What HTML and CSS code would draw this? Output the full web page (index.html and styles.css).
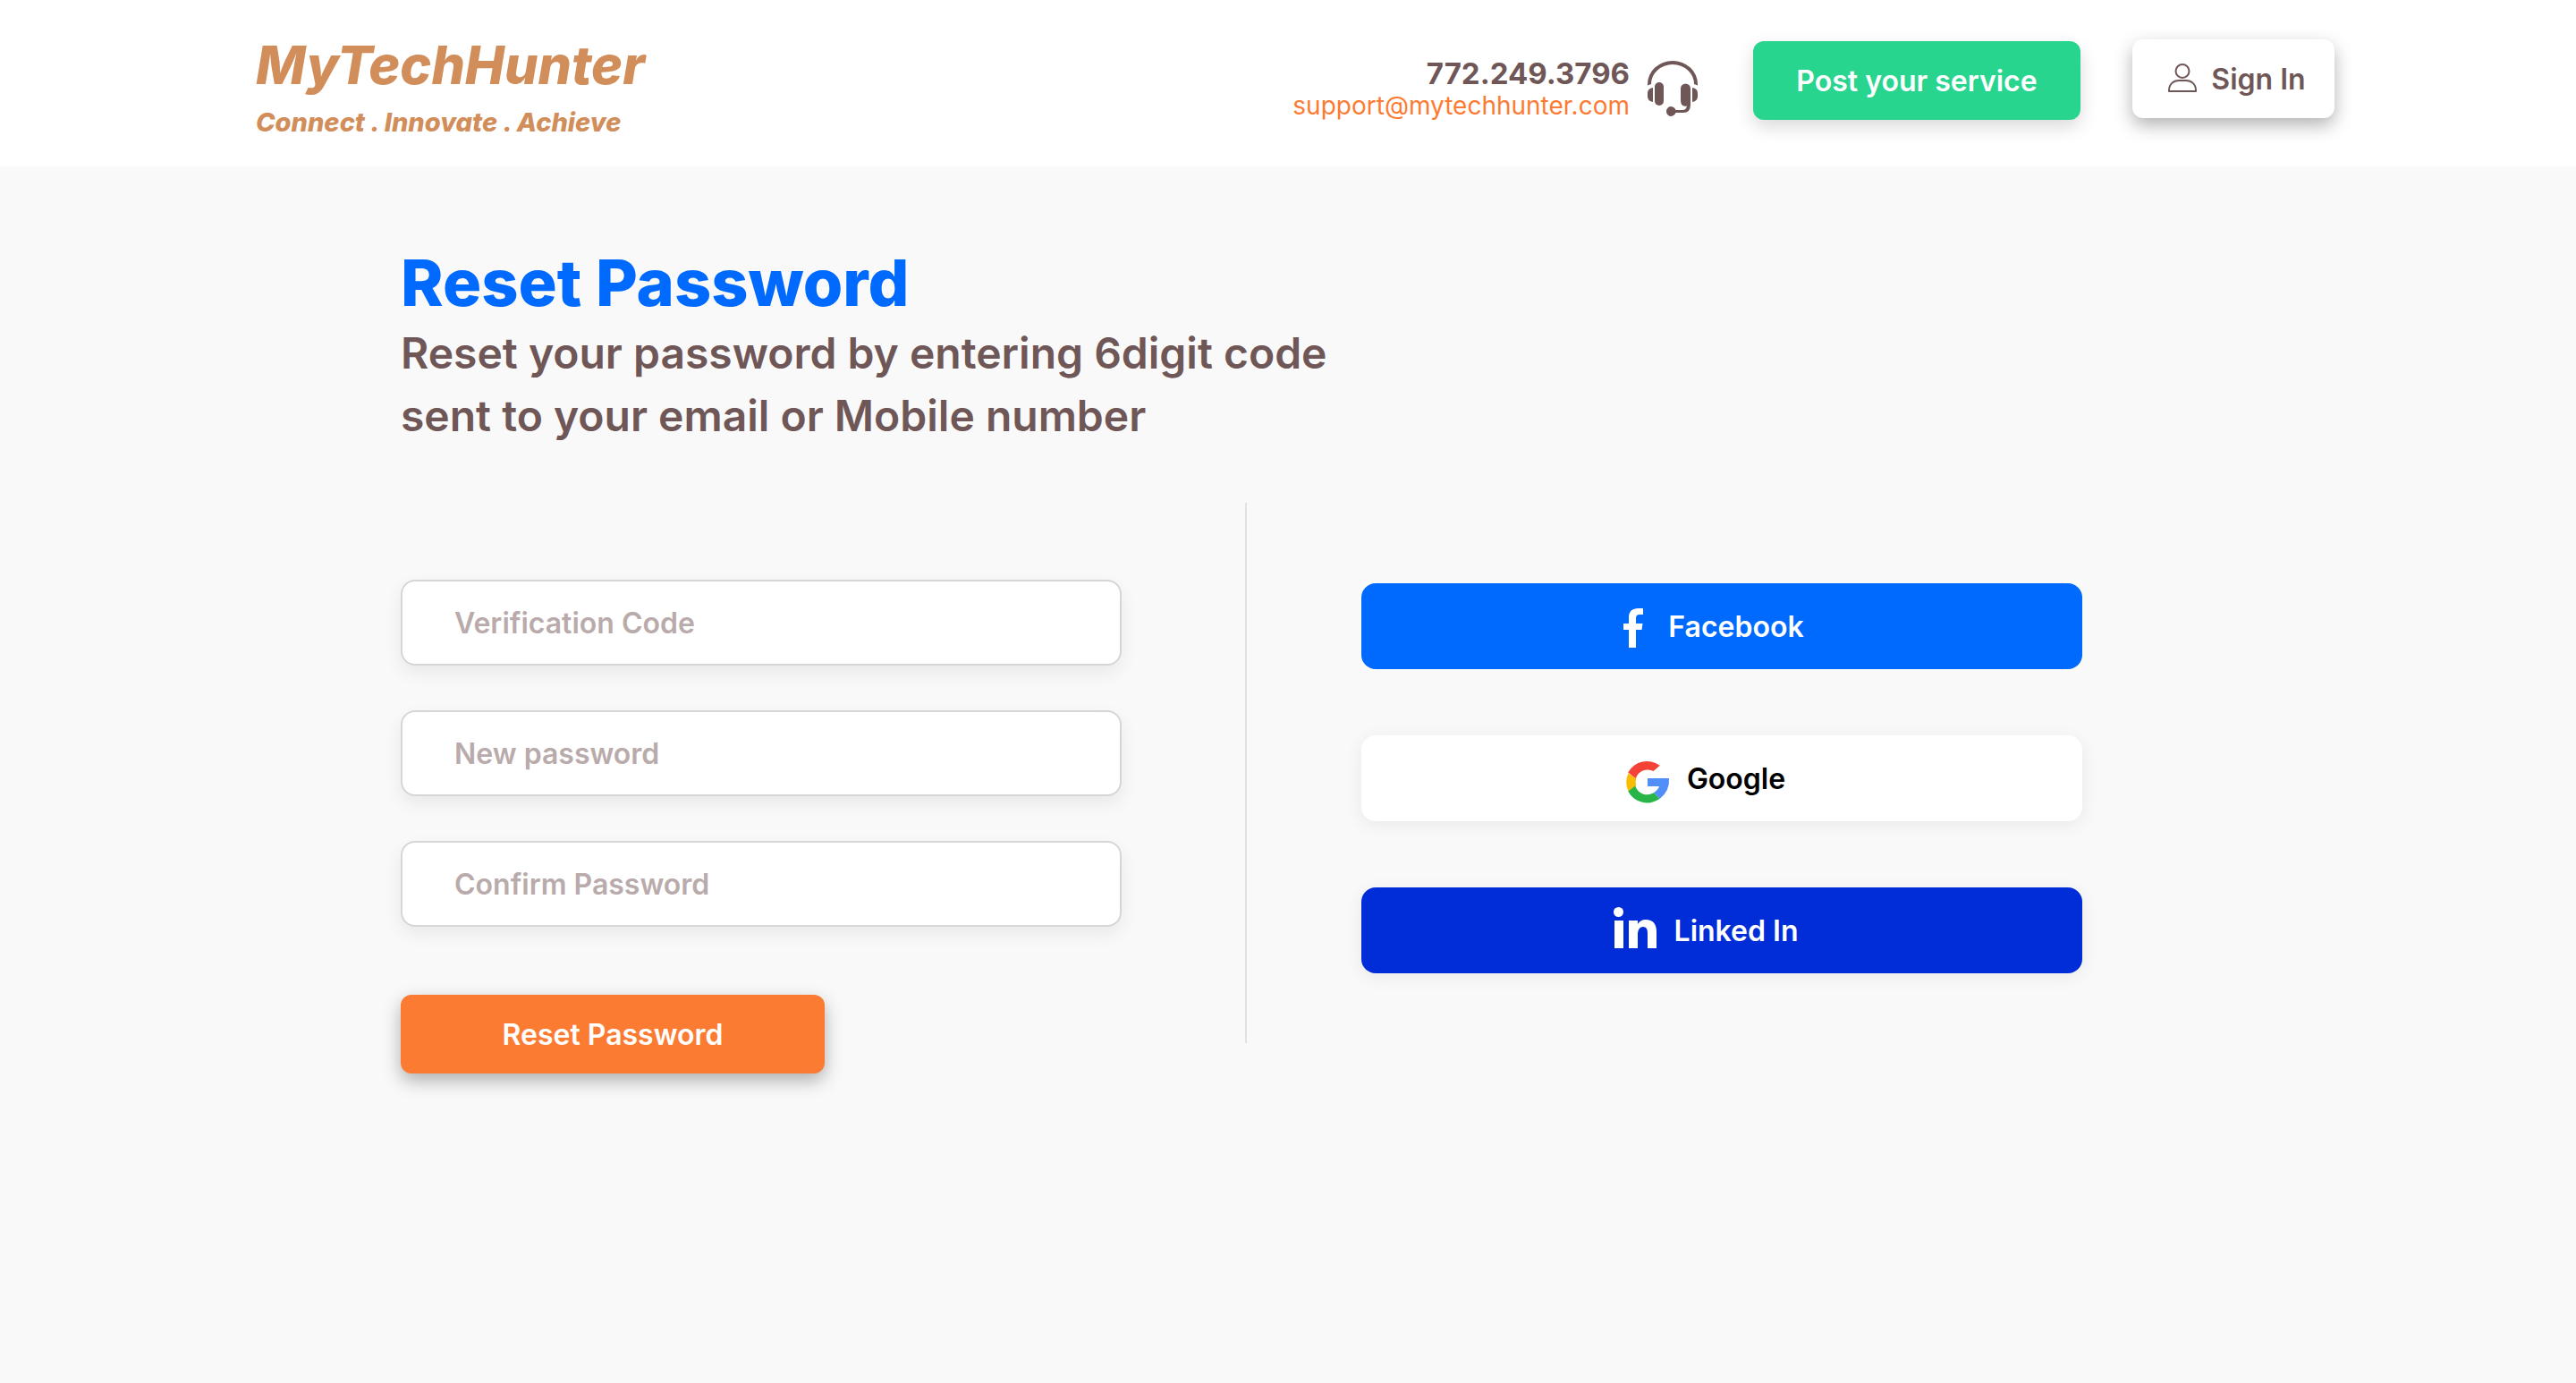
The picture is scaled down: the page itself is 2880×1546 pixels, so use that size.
FILE: index.html
```html
<!DOCTYPE html>
<html lang="en">
<head>
<meta charset="utf-8">
<meta name="viewport" content="width=device-width, initial-scale=1">
<title>Reset Password - MyTechHunter</title>
<link rel="stylesheet" href="styles.css">
</head>
<body>
<header class="site-header">
  <a class="brand" href="#">
    <span class="brand-name">MyTechHunter</span>
    <span class="brand-tagline">Connect . Innovate . Achieve</span>
  </a>
  <div class="header-actions">
    <div class="contact">
      <div class="contact-lines">
        <a class="contact-phone" href="tel:7722493796">772.249.3796</a>
        <a class="contact-email" href="mailto:support@mytechhunter.com">support@mytechhunter.com</a>
      </div>
      <svg class="icon-headset" viewBox="0 0 56 62" aria-hidden="true">
        <path d="M0 27.500V26a28 26 0 0 1 56 0v1.500l-4-1.500a24 22 0 0 0-48 0z" fill="currentColor"/>
        <rect x="8" y="24" width="10" height="26" rx="5" fill="currentColor"/>
        <path d="M6 30v16Q0 45 0 40v-4Q0 31 6 30zM50 30v16q6-1 6-6v-4q0-5-6-6z" fill="currentColor"/>
        <path d="M37 31a5.500 5.500 0 0 1 11 0v18q0 9-8 9h-8.500a5.400 5.400 0 1 1 0-3H39q4 0 5-4.500Q37 52 37 44z" fill="currentColor"/>
      </svg>
    </div>
    <button class="button button-post" type="button">Post your service</button>
    <button class="button button-signin" type="button">
      <svg class="icon-user" viewBox="0 0 32 34" fill="none" stroke="currentColor" stroke-width="2" aria-hidden="true">
        <circle cx="16" cy="8.500" r="7.500"/>
        <path d="M1 31v-1c0-7 5-11 11-11h8c6 0 11 4 11 11v1z" stroke-linejoin="round"/>
      </svg>
      Sign In
    </button>
  </div>
</header>
<main class="page">
  <h1 class="title">Reset Password</h1>
  <p class="subtitle">Reset your password by entering 6digit code<br>sent to your email or Mobile number</p>
  <div class="columns">
    <form class="reset-form">
      <input class="field" type="text" placeholder="Verification Code" aria-label="Verification Code">
      <input class="field" type="password" placeholder="New password" aria-label="New password">
      <input class="field" type="password" placeholder="Confirm Password" aria-label="Confirm Password">
      <button class="button button-reset" type="button">Reset Password</button>
    </form>
    <div class="divider"></div>
    <div class="social">
      <button class="social-button facebook" type="button">
        <svg class="icon-social" viewBox="0 0 48 52" aria-hidden="true"><path d="M24 50V30h-6v-7h6v-7q0-10 11-10h5v7h-4q-4 0-4 4v6h7.500l-1 7H32v20z" fill="#fff"/></svg>
        Facebook
      </button>
      <button class="social-button google" type="button">
        <svg class="icon-social" viewBox="0 0 48 52" aria-hidden="true">
          <path d="M37.800 11.800A24 24 0 0 0 2.200 19.500l8.500 6.800A14 14 0 0 1 30.500 18z" fill="#f44336"/>
          <path d="M2.400 20.600a24 24 0 0 0 0 19.800l8.800-5.800a14 14 0 0 1 0-8.400z" fill="#fbbc05"/>
          <path d="M2.200 40.500a24 24 0 0 0 35.600 8.200l-7-6.400a14 14 0 0 1-20.600-7.800z" fill="#28b446"/>
          <path d="M24 26h24q1 14-10.200 22.700l-7-6.400q5-3.300 6.200-7.300H24z" fill="#518ef8"/>
        </svg>
        Google
      </button>
      <button class="social-button linkedin" type="button">
        <svg class="icon-social" viewBox="0 0 48 52" aria-hidden="true"><circle cx="5.500" cy="5.500" r="5.500" fill="#fff"/><path d="M1 15h10v31H1zM17 15h10v4q3-5 9-5 12 0 12 14v18H38V29q0-7-5-7t-6 7v17H17z" fill="#fff"/></svg>
        Linked In
      </button>
    </div>
  </div>
</main>
</body>
</html>
```
FILE: styles.css
```css
* {
  box-sizing: border-box;
}

body {
  margin: 0;
  min-height: 100vh;
  background: #f9f9f9;
  color: #705757;
  font-family: Inter, "Liberation Sans", sans-serif;
}

button,
input {
  font: inherit;
}

.site-header {
  display: flex;
  justify-content: space-between;
  padding: 38px 270px 32px 286px;
  background: #fff;
}

.brand {
  display: flex;
  flex-direction: column;
  color: #d28e5a;
  font-style: italic;
  text-decoration: none;
}

.brand-name {
  font-size: 59px;
  font-weight: 800;
  line-height: 70px;
}

.brand-tagline {
  padding-top: 12px;
  font-size: 29px;
  font-weight: 800;
  line-height: 34px;
}

.header-actions {
  display: flex;
  align-items: flex-start;
}

.contact {
  display: flex;
  gap: 20px;
  margin: 26px 62px 0 0;
}

.contact-lines {
  display: flex;
  flex-direction: column;
  align-items: flex-end;
}

.contact-phone {
  color: #705757;
  font-size: 33px;
  font-weight: 700;
  line-height: 36px;
  text-decoration: none;
}

.contact-email {
  color: #fc7b32;
  font-size: 28px;
  line-height: 36px;
  text-decoration: none;
}

.icon-headset {
  width: 56px;
  height: 62px;
  margin-top: 4px;
}

.button {
  height: 88px;
  border: 0;
  border-radius: 12px;
  color: #fff;
  font-size: 32px;
  font-weight: 600;
  cursor: pointer;
}

.button-post {
  width: 366px;
  margin: 8px 58px 0 0;
  background: #27d58f;
  box-shadow: 0 8px 20px rgba(0, 0, 0, 0.15);
}

.button-signin {
  display: flex;
  align-items: center;
  justify-content: center;
  gap: 16px;
  width: 226px;
  margin-top: 6px;
  padding: 0 6px 0 14px;
  background: #fff;
  color: #705757;
  box-shadow: 0 8px 20px rgba(0, 0, 0, 0.3);
}

.icon-user {
  width: 32px;
  height: 34px;
}

.page {
  padding: 86px 448px 0;
}

.title {
  margin: 0;
  color: #006aff;
  font-size: 72px;
  font-weight: 800;
  line-height: 88px;
}

.subtitle {
  margin: 0;
  font-size: 48px;
  font-weight: 600;
  line-height: 70px;
}

.columns {
  display: grid;
  grid-template-columns: minmax(0, 816px) 2px minmax(0, 806px);
  column-gap: 128px;
  margin-top: 62px;
}

.reset-form {
  display: flex;
  flex-direction: column;
  gap: 50px;
  padding: 86px 10px 0 0;
}

.field {
  width: 100%;
  height: 96px;
  padding: 0 58px;
  border: 2px solid #d6d6d6;
  border-radius: 16px;
  background: #fff;
  color: #705757;
  font-size: 32px;
  font-weight: 600;
  box-shadow: 0 8px 20px rgba(0, 0, 0, 0.07);
}

.field::placeholder {
  color: #b9abab;
  opacity: 1;
}

.button-reset {
  width: 474px;
  margin-top: 26px;
  background: #fc7b32;
  box-shadow: 0 8px 20px rgba(0, 0, 0, 0.3);
}

.divider {
  height: 604px;
  background: #e2e2e2;
}

.social {
  display: flex;
  flex-direction: column;
  gap: 74px;
  padding-top: 90px;
}

.social-button {
  display: flex;
  align-items: center;
  justify-content: center;
  gap: 20px;
  height: 96px;
  padding: 0 36px 0 0;
  border: 0;
  border-radius: 16px;
  color: #fff;
  font-size: 32px;
  font-weight: 600;
  cursor: pointer;
}

.icon-social {
  width: 48px;
  height: 52px;
  overflow: visible;
}

.facebook {
  background: #006aff;
}

.google {
  background: #fff;
  color: #000;
  box-shadow: 0 4px 20px rgba(0, 0, 0, 0.07);
}

.linkedin {
  background: #002dd8;
  box-shadow: 0 4px 20px rgba(0, 0, 0, 0.07);
}
```
